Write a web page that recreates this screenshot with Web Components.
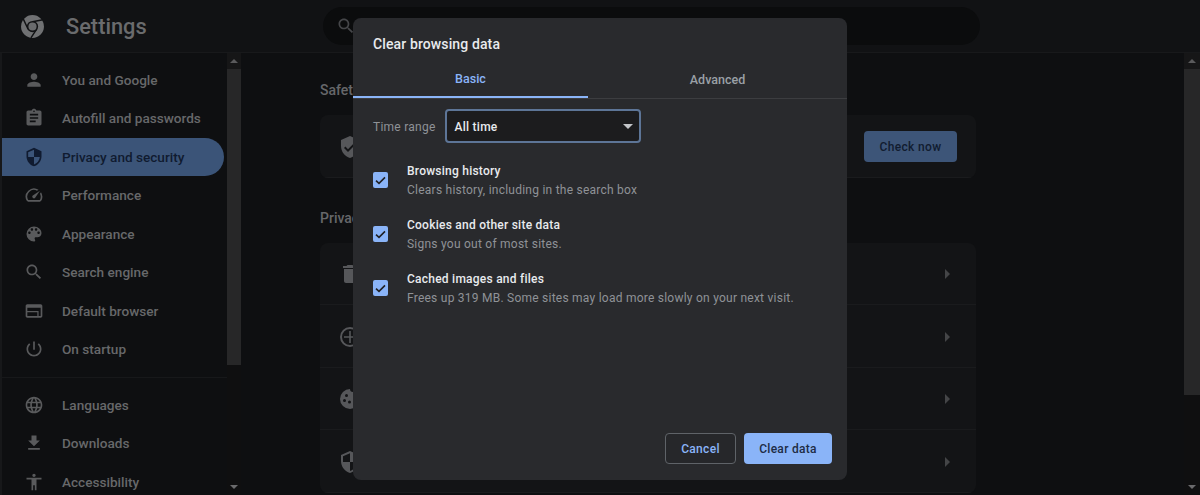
<!DOCTYPE html>
<html lang="en">
<head>
<meta charset="utf-8">
<title>Settings</title>
<style>
  html, body { margin: 0; height: 100%; background: #0e0f11; overflow: hidden; }
  body { font-family: Roboto, "Liberation Sans", sans-serif; }
</style>
</head>
<body>
<settings-app></settings-app>

<script>
const ICONS = {
  person: 'M12 12c2.21 0 4-1.79 4-4s-1.79-4-4-4-4 1.79-4 4 1.79 4 4 4zm0 2c-2.67 0-8 1.34-8 4v2h16v-2c0-2.66-5.33-4-8-4z',
  clipboard: 'M19 3h-4.18C14.4 1.84 13.3 1 12 1c-1.3 0-2.4.84-2.82 2H5c-1.1 0-2 .9-2 2v14c0 1.1.9 2 2 2h14c1.1 0 2-.9 2-2V5c0-1.1-.9-2-2-2zm-7 0c.55 0 1 .45 1 1s-.45 1-1 1-1-.45-1-1 .45-1 1-1zm2 14H7v-2h7v2zm3-4H7v-2h10v2zm0-4H7V7h10v2z',
  shield: 'M12 1L3 5v6c0 5.55 3.84 10.74 9 12 5.16-1.26 9-6.45 9-12V5l-9-4zm0 10.99h7c-.53 4.12-3.28 7.79-7 8.94V12H5V6.3l7-3.11v8.8z',
  speed: 'M20.38 8.57l-1.23 1.85a8 8 0 0 1-.22 7.58H5.07A8 8 0 0 1 15.58 6.85l1.85-1.23A10 10 0 0 0 3.35 19a2 2 0 0 0 1.72 1h13.85a2 2 0 0 0 1.74-1 10 10 0 0 0-.27-10.44zm-9.79 6.84a2 2 0 0 0 2.83 0l5.66-8.49-8.49 5.66a2 2 0 0 0 0 2.83z',
  palette: 'M12 3a9 9 0 0 0 0 18c.83 0 1.5-.67 1.5-1.5 0-.39-.15-.74-.39-1.01-.23-.26-.38-.61-.38-.99 0-.83.67-1.5 1.5-1.5H16c2.76 0 5-2.24 5-5 0-4.42-4.03-8-9-8zm-5.5 9c-.83 0-1.5-.67-1.5-1.5S5.67 9 6.5 9 8 9.67 8 10.5 7.33 12 6.5 12zm3-4C8.67 8 8 7.33 8 6.5S8.67 5 9.5 5s1.5.67 1.5 1.5S10.33 8 9.5 8zm5 0c-.83 0-1.5-.67-1.5-1.5S13.67 5 14.5 5s1.5.67 1.5 1.5S15.33 8 14.5 8zm3 4c-.83 0-1.5-.67-1.5-1.5S16.67 9 17.5 9s1.5.67 1.5 1.5-.67 1.5-1.5 1.5z',
  search: 'M15.5 14h-.79l-.28-.27C15.41 12.59 16 11.11 16 9.5 16 5.91 13.09 3 9.5 3S3 5.91 3 9.5 5.91 16 9.5 16c1.61 0 3.09-.59 4.23-1.57l.27.28v.79l5 4.99L20.49 19l-4.99-5zm-6 0C7.01 14 5 11.99 5 9.5S7.01 5 9.5 5 14 7.01 14 9.5 11.99 14 9.5 14z',
  browser: 'M20 4H4c-1.1 0-2 .9-2 2v12c0 1.1.9 2 2 2h16c1.1 0 2-.9 2-2V6c0-1.1-.9-2-2-2zm0 14H4V8h16v10zM4 12h12v1.5H4zM16 12h1.5v6H16z',
  power: 'M13 3h-2v10h2V3zm4.83 2.17l-1.42 1.42C17.99 7.86 19 9.81 19 12c0 3.87-3.13 7-7 7s-7-3.13-7-7c0-2.19 1.01-4.14 2.58-5.42L6.17 5.17C4.23 6.82 3 9.26 3 12c0 4.97 4.03 9 9 9s9-4.03 9-9c0-2.74-1.23-5.18-3.17-6.83z',
  globe: 'M11.99 2C6.47 2 2 6.48 2 12s4.47 10 9.99 10C17.52 22 22 17.52 22 12S17.52 2 11.99 2zm6.93 6h-2.95c-.32-1.25-.78-2.45-1.38-3.56 1.84.63 3.37 1.91 4.33 3.56zM12 4.04c.83 1.2 1.48 2.53 1.91 3.96h-3.82c.43-1.43 1.08-2.76 1.91-3.96zM4.26 14C4.1 13.36 4 12.69 4 12s.1-1.36.26-2h3.38c-.08.66-.14 1.32-.14 2 0 .68.06 1.34.14 2H4.26zm.82 2h2.95c.32 1.25.78 2.45 1.38 3.56-1.84-.63-3.37-1.9-4.33-3.56zm2.95-8H5.08c.96-1.66 2.49-2.93 4.33-3.56C8.81 5.55 8.35 6.75 8.03 8zM12 19.96c-.83-1.2-1.48-2.53-1.91-3.96h3.82c-.43 1.43-1.08 2.76-1.91 3.96zM14.34 14H9.66c-.09-.66-.16-1.32-.16-2 0-.68.07-1.35.16-2h4.68c.09.65.16 1.32.16 2 0 .68-.07 1.34-.16 2zm.25 5.56c.6-1.11 1.06-2.31 1.38-3.56h2.95c-.96 1.65-2.49 2.93-4.33 3.56zM16.36 14c.08-.66.14-1.32.14-2 0-.68-.06-1.34-.14-2h3.38c.16.64.26 1.31.26 2s-.1 1.36-.26 2h-3.38z',
  download: 'M19 9h-4V3H9v6H5l7 7 7-7zM5 18v2h14v-2H5z',
  accessibility: 'M12 2c1.1 0 2 .9 2 2s-.9 2-2 2-2-.9-2-2 .9-2 2-2zm9 7h-6v13h-2v-6h-2v6H9V9H3V7h18v2z',
  trash: 'M6 19c0 1.1.9 2 2 2h8c1.1 0 2-.9 2-2V7H6v12zM19 4h-3.5l-1-1h-5l-1 1H5v2h14V4z',
  tune: 'M12 2a10 10 0 1 0 0 20 10 10 0 0 0 0-20zm0 2a8 8 0 1 1 0 16 8 8 0 0 1 0-16zM11.2 6v5.2H6v1.6h5.2V18h1.6v-5.2H18v-1.6h-5.2V6z',
  cookie: 'M12 2a10 10 0 1 0 10 10c-2 0-3-1-3-3-2 0-4-1-4-4-2 0-3-1-3-3zM8.5 7a1.5 1.5 0 1 1 0 3 1.5 1.5 0 0 1 0-3zm-2 5a1.5 1.5 0 1 1 0 3 1.5 1.5 0 0 1 0-3zm5 1.5a1.5 1.5 0 1 1 0 3 1.5 1.5 0 0 1 0-3zm5 1a1.5 1.5 0 1 1 0 3 1.5 1.5 0 0 1 0-3z',
  verified: 'M12 1L3 5v6c0 5.55 3.84 10.74 9 12 5.16-1.26 9-6.45 9-12V5l-9-4zm-2 16l-4-4 1.41-1.41L10 14.17l6.59-6.59L18 9l-8 8z'
};

const svgIcon = (name, size = 20) =>
  `<svg width="${size}" height="${size}" viewBox="0 0 24 24" fill="currentColor" fill-rule="evenodd"><path d="${ICONS[name]}"/></svg>`;

class NavItem extends HTMLElement {
  constructor() {
    super();
    this.attachShadow({ mode: 'open' });
    this.shadowRoot.innerHTML = `
      <style>
        :host {
          display: flex;
          align-items: center;
          gap: 18px;
          height: 38.5px;
          box-sizing: border-box;
          padding-left: 22px;
          margin-right: 3px;
          border-radius: 0 19px 19px 0;
          color: #67686a;
          font-size: 13.6px;
          font-weight: 500;
        }
        :host([active]) { background: #3b5478; color: #101b30; }
        svg { display: block; flex: none; opacity: .85; }
        :host([active]) svg { opacity: 1; }
      </style>
      <span id="icon"></span>
      <slot></slot>
    `;
  }
  connectedCallback() {
    const icon = this.shadowRoot.querySelector('#icon');
    icon.innerHTML = svgIcon(this.getAttribute('icon'));
  }
}
customElements.define('nav-item', NavItem);

class SideNav extends HTMLElement {
  constructor() {
    super();
    this.attachShadow({ mode: 'open' });
    this.shadowRoot.innerHTML = `
      <style>
        :host {
          display: block;
          width: 227px;
          flex: none;
          box-sizing: border-box;
          border-left: 2px solid #17181a;
          padding-top: 7.5px;
          overflow: hidden;
        }
        hr { border: 0; border-top: 1px solid #17181a; margin: 8px 0 8px; }
      </style>
      <nav-item icon="person">You and Google</nav-item>
      <nav-item icon="clipboard">Autofill and passwords</nav-item>
      <nav-item icon="shield" active>Privacy and security</nav-item>
      <nav-item icon="speed">Performance</nav-item>
      <nav-item icon="palette">Appearance</nav-item>
      <nav-item icon="search">Search engine</nav-item>
      <nav-item icon="browser">Default browser</nav-item>
      <nav-item icon="power">On startup</nav-item>
      <hr>
      <nav-item icon="globe">Languages</nav-item>
      <nav-item icon="download">Downloads</nav-item>
      <nav-item icon="accessibility">Accessibility</nav-item>
    `;
  }
}
customElements.define('side-nav', SideNav);

class ScrollBar extends HTMLElement {
  constructor() {
    super();
    this.attachShadow({ mode: 'open' });
    this.shadowRoot.innerHTML = `
      <style>
        :host {
          display: flex;
          flex-direction: column;
          flex: none;
          width: 14px;
          background: #0f0f10;
        }
        .btn { height: 16px; flex: none; display: flex; align-items: center; justify-content: center; background: #161617; }
        .btn.down { margin-top: auto; background: none; }
        .thumb { background: #272728; flex: none; }
        i { width: 0; height: 0; border: 4px solid transparent; border-top: 0; border-bottom: 4px solid #5a5a5c; }
        .down i { border-bottom: 0; border-top: 4px solid #6a6a6c; }
      </style>
      <div class="btn"><i></i></div>
      <div class="thumb"></div>
      <div class="btn down"><i></i></div>
    `;
  }
  connectedCallback() {
    this.shadowRoot.querySelector('.thumb').style.height = this.getAttribute('thumb') + 'px';
  }
}
customElements.define('scroll-bar', ScrollBar);

class TopBar extends HTMLElement {
  constructor() {
    super();
    this.attachShadow({ mode: 'open' });
    this.shadowRoot.innerHTML = `
      <style>
        :host {
          display: flex;
          align-items: center;
          height: 53px;
          flex: none;
          box-sizing: border-box;
          border-bottom: 1px solid #18191b;
          background: #111214;
          padding-left: 20px;
        }
        svg.logo { display: block; flex: none; margin-right: 21px; }
        h1 { margin: 0; width: 257px; flex: none; font-size: 21.8px; font-weight: 500; color: #6a6b6d; }
        .search {
          width: 657px;
          height: 38px;
          box-sizing: border-box;
          padding-left: 13px;
          display: flex;
          align-items: center;
          border-radius: 19px;
          background: #0b0c0d;
          color: #454649;
        }
        .search svg { display: block; }
      </style>
      <svg class="logo" width="25" height="25" viewBox="0 0 24 24">
        <circle cx="12" cy="12" r="11" fill="#707173"/>
        <path d="M12 7.4 L22 5.5 M7.8 14.6 L3 4.5 M16 14.5 L10.5 23" stroke="#111214" stroke-width="1.4"/>
        <circle cx="12" cy="12" r="5.4" fill="#111214"/>
        <circle cx="12" cy="12" r="3.9" fill="#6a6b6d"/>
      </svg>
      <h1>Settings</h1>
      <div class="search">${svgIcon('search', 20)}</div>
    `;
  }
}
customElements.define('top-bar', TopBar);

class SettingsRow extends HTMLElement {
  constructor() {
    super();
    this.attachShadow({ mode: 'open' });
    this.shadowRoot.innerHTML = `
      <style>
        :host {
          display: flex;
          align-items: center;
          justify-content: space-between;
          height: 62.5px;
          box-sizing: border-box;
          padding: 2px 19px 0 18px;
          border-bottom: 1px solid #1a1b1d;
          color: #56575a;
        }
        svg { display: block; }
        .arrow { display: block; width: 0; height: 0; margin-right: 7px; border: 5px solid transparent; border-right: 0; border-left: 5px solid #444547; }
        ::slotted(*) { margin-left: auto; }
      </style>
      <span id="icon"></span>
      <slot><i class="arrow"></i></slot>
    `;
  }
  connectedCallback() {
    this.shadowRoot.querySelector('#icon').innerHTML = svgIcon(this.getAttribute('icon'), 24);
  }
}
customElements.define('settings-row', SettingsRow);

class SettingsCard extends HTMLElement {
  constructor() {
    super();
    this.attachShadow({ mode: 'open' });
    this.shadowRoot.innerHTML = `
      <style>
        :host { display: block; margin-bottom: 32px; }
        h2 { margin: 0 0 16px; font-size: 14px; line-height: 17px; font-weight: 500; color: #66676a; }
        .card { background: #131416; border-radius: 8px; overflow: hidden; }
      </style>
      <h2></h2>
      <div class="card"><slot></slot></div>
    `;
  }
  connectedCallback() {
    this.shadowRoot.querySelector('h2').textContent = this.getAttribute('heading');
  }
}
customElements.define('settings-card', SettingsCard);

class CheckButton extends HTMLElement {
  constructor() {
    super();
    this.attachShadow({ mode: 'open' });
    this.shadowRoot.innerHTML = `
      <style>
        :host {
          display: flex;
          align-items: center;
          justify-content: center;
          width: 93px;
          height: 31px;
          border-radius: 4px;
          background: #3d5578;
          color: #111c30;
          font-size: 12px;
          font-weight: 500;
          letter-spacing: .35px;
        }
      </style>
      <slot></slot>
    `;
  }
}
customElements.define('check-button', CheckButton);

class CheckRow extends HTMLElement {
  constructor() {
    super();
    this.attachShadow({ mode: 'open' });
    this.shadowRoot.innerHTML = `
      <style>
        :host {
          display: flex;
          align-items: center;
          gap: 19px;
          height: 54px;
          font-size: 12px;
          letter-spacing: .24px;
        }
        .box {
          width: 15px;
          height: 16px;
          flex: none;
          border-radius: 2px;
          background: #8ab4f8;
          display: flex;
          align-items: center;
          justify-content: center;
        }
        .box svg { display: block; }
        .text { margin-top: 2px; }
        .label { color: #e8eaed; font-weight: 500; line-height: 19px; }
        .sub { color: #8f9297; line-height: 19px; }
      </style>
      <div class="box">
        <svg width="11" height="9" viewBox="0 0 11 9"><path d="M1 4.6 L4 7.4 L10 1.4" fill="none" stroke="#202124" stroke-width="1.6"/></svg>
      </div>
      <div class="text">
        <div class="label"></div>
        <div class="sub"></div>
      </div>
    `;
  }
  connectedCallback() {
    this.shadowRoot.querySelector('.label').textContent = this.getAttribute('label');
    this.shadowRoot.querySelector('.sub').textContent = this.getAttribute('sub');
  }
}
customElements.define('check-row', CheckRow);

class ClearDialog extends HTMLElement {
  constructor() {
    super();
    this.attachShadow({ mode: 'open' });
    this.shadowRoot.innerHTML = `
      <style>
        :host {
          position: absolute;
          left: 353px;
          top: 18px;
          width: 494px;
          height: 462px;
          display: flex;
          flex-direction: column;
          box-sizing: border-box;
          background: #292a2d;
          border-radius: 8px;
          color: #e8eaed;
        }
        h3 { margin: 0; padding: 16px 20px 0; font-size: 14px; line-height: 20px; font-weight: 500; letter-spacing: .12px; }
        .tabs { display: flex; margin-top: 9px; height: 35px; border-bottom: 1px solid #3c3d40; font-size: 12.5px; font-weight: 500; }
        .tabs div { width: 235px; height: 35px; box-sizing: border-box; display: flex; align-items: center; justify-content: center; color: #9aa0a6; padding-top: 1px; padding-bottom: 4px; }
        .tabs .on { color: #8ab4f8; border-bottom: 2px solid #8ab4f8; }
        .tabs .rest { flex: 1; }
        .range { display: flex; align-items: center; gap: 9px; padding: 10px 20px 0; font-size: 12px; color: #8f9297; letter-spacing: .25px; }
        .range span { padding-top: 2px; }
        .select {
          width: 196px;
          height: 34px;
          box-sizing: border-box;
          display: flex;
          align-items: center;
          justify-content: space-between;
          padding: 0 5px 0 8px;
          border: 2px solid #5d7597;
          border-radius: 4px;
          background: #1c1c1e;
          color: #e8eaed;
          font-weight: 500;
        }
        .select i { width: 0; height: 0; margin-right: 1px; border: 5.5px solid transparent; border-bottom: 0; border-top: 5px solid #c4c6c9; }
        .rows { padding: 10px 20px 0; }
        .actions { margin-top: auto; padding: 0 15px 16px; display: flex; justify-content: flex-end; gap: 8px; font-size: 12px; font-weight: 500; letter-spacing: .3px; }
        .actions div { height: 31px; display: flex; align-items: center; justify-content: center; border-radius: 4px; box-sizing: border-box; }
        .cancel { width: 71px; border: 1px solid #5f6368; color: #8ab4f8; background: #26272a; }
        .ok { width: 88px; background: #8ab4f8; color: #202c45; }
      </style>
      <h3>Clear browsing data</h3>
      <div class="tabs">
        <div class="on">Basic</div>
        <div class="rest">Advanced</div>
      </div>
      <div class="range">
        <span>Time range</span>
        <div class="select"><span>All time</span><i></i></div>
      </div>
      <div class="rows">
        <check-row label="Browsing history" sub="Clears history, including in the search box"></check-row>
        <check-row label="Cookies and other site data" sub="Signs you out of most sites."></check-row>
        <check-row label="Cached images and files" sub="Frees up 319 MB. Some sites may load more slowly on your next visit."></check-row>
      </div>
      <div class="actions">
        <div class="cancel">Cancel</div>
        <div class="ok">Clear data</div>
      </div>
    `;
  }
}
customElements.define('clear-dialog', ClearDialog);

class SettingsApp extends HTMLElement {
  constructor() {
    super();
    this.attachShadow({ mode: 'open' });
    this.shadowRoot.innerHTML = `
      <style>
        :host {
          display: flex;
          flex-direction: column;
          position: relative;
          height: 495px;
          overflow: hidden;
          background: #0e0f11;
          font-family: Roboto, "Liberation Sans", sans-serif;
        }
        .body { display: flex; flex: 1; min-height: 0; }
        main { flex: 1; min-width: 0; overflow: hidden; padding: 29px 0 0 79px; }
        .col { width: 656px; }
        #right { width: 16px; }
      </style>
      <top-bar></top-bar>
      <div class="body">
        <side-nav></side-nav>
        <scroll-bar thumb="296"></scroll-bar>
        <main>
          <div class="col">
            <settings-card heading="Safety">
              <settings-row icon="verified"><check-button>Check now</check-button></settings-row>
            </settings-card>
            <settings-card heading="Privacy">
              <settings-row icon="trash"></settings-row>
              <settings-row icon="tune"></settings-row>
              <settings-row icon="cookie"></settings-row>
              <settings-row icon="shield"></settings-row>
            </settings-card>
          </div>
        </main>
        <scroll-bar id="right" thumb="326"></scroll-bar>
      </div>
      <clear-dialog></clear-dialog>
    `;
  }
}
customElements.define('settings-app', SettingsApp);
</script>
</body>
</html>
